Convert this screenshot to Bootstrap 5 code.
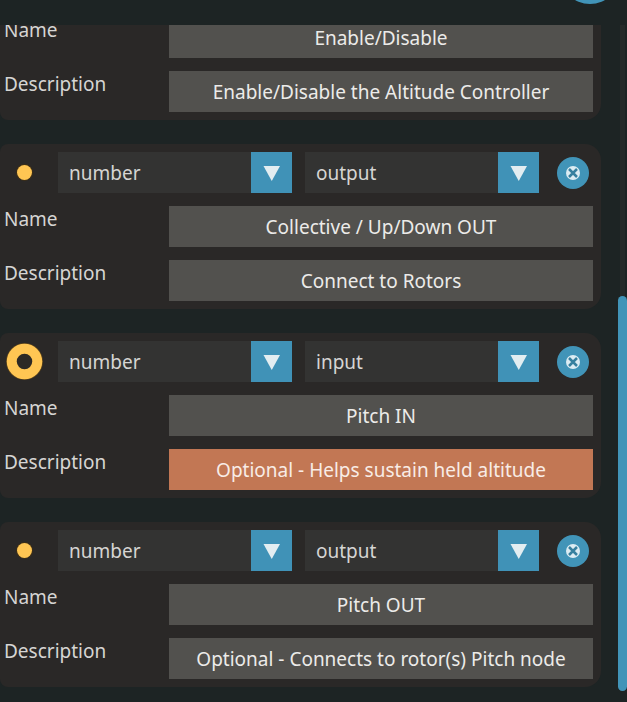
<!DOCTYPE html>
<html lang="en">
<head>
<meta charset="utf-8">
<meta name="viewport" content="width=device-width, initial-scale=1">
<title>Logic nodes</title>
<link href="https://cdn.jsdelivr.net/npm/bootstrap@5.3.0/dist/css/bootstrap.min.css" rel="stylesheet">
<style>
  body { background: #1d2424; color: #d6d5d3; font-family: "Noto Sans", sans-serif; font-size: 19px; line-height: 26px; }
  .topbar { height: 25px; padding-right: 7px; }
  .add-btn { width: 60px; height: 60px; margin-bottom: 21px; background: #4194b8; }
  .node-list { gap: 24px; padding-bottom: 15px; }
  .node-card { background: #2a2827; border-radius: 8px 16px 16px 8px; padding: 8px 8px 8px 0; gap: 13px; }
  .node-card.cut { padding-top: 0; border-top-right-radius: 0; border-top-left-radius: 0; }
  .head-row { gap: 13px; }
  .pin { width: 45px; padding-left: 4px; }
  .pick { appearance: none; flex: 1 1 0; min-width: 0; height: 41px; padding: 0 52px 0 11px; border: 0; border-radius: 0; color: #d6d5d3;
    background: url("data:image/svg+xml,%3Csvg xmlns='http://www.w3.org/2000/svg' width='41' height='41'%3E%3Crect width='41' height='41' fill='%234092b7'/%3E%3Cpath d='M12.500 14h16.500l-8.250 15z' fill='%23e2edf1'/%3E%3C/svg%3E") right center / 41px 41px no-repeat #333332; }
  .close-slot { width: 41px; }
  .del-btn { width: 32px; height: 32px; background: #4194b8; }
  .name-label { width: 169px; padding-left: 4px; flex: none; }
  .field { flex: 1 1 0; min-width: 0; height: 41px; border: 0; padding: 0 8px; background: #52514e; color: #ecebe9; text-align: center; }
  .field.hot { background: #c27754; color: #f8ece6; }
  .scroll-col { width: 9px; margin-left: 17px; padding-bottom: 11px; }
  .track { background: linear-gradient(#252a29, #252a29) 2px 0 / 5px 100% no-repeat; }
  .thumb { height: 395px; border-radius: 5px; background: #4194b8; }
</style>
<script src="https://cdn.jsdelivr.net/npm/bootstrap@5.3.0/dist/js/bootstrap.bundle.min.js"></script>
</head>
<body class="vh-100 d-flex flex-column overflow-hidden">

<svg class="d-none" aria-hidden="true">
  <symbol id="cross" viewBox="0 0 16 16">
    <circle cx="8" cy="8" r="7" fill="#dcecf3"/>
    <path d="M4 4l8 8M12 4l-8 8" stroke="#37809f" stroke-width="2.500" fill="none"/>
  </symbol>
  <symbol id="dot" viewBox="0 0 41 41">
    <circle cx="20.500" cy="20.500" r="8.500" fill="#3d2f18"/>
    <circle cx="20.500" cy="20.500" r="7.500" fill="#ffc653"/>
  </symbol>
  <symbol id="ring" viewBox="0 0 41 41">
    <circle cx="20.500" cy="20.500" r="18.500" fill="#5a431b"/>
    <circle cx="20.500" cy="20.500" r="17.750" fill="#ffc653"/>
    <circle cx="20.500" cy="20.500" r="7.750" fill="#2c2925"/>
  </symbol>
</svg>

<header class="topbar d-flex justify-content-end align-items-end overflow-hidden flex-shrink-0">
  <button type="button" class="add-btn btn rounded-circle border-0 p-0 flex-shrink-0" aria-label="Add node"></button>
</header>

<div class="d-flex flex-grow-1 overflow-hidden">
  <main class="node-list d-flex flex-column justify-content-end flex-grow-1 overflow-hidden">

    <section class="node-card cut d-flex flex-column flex-shrink-0">
      <div class="d-flex"><label class="name-label" for="n1">Name</label><input class="field" id="n1" type="text" value="Enable/Disable"></div>
      <div class="d-flex"><label class="name-label" for="d1">Description</label><input class="field" id="d1" type="text" value="Enable/Disable the Altitude Controller"></div>
    </section>

    <section class="node-card d-flex flex-column flex-shrink-0">
      <div class="head-row d-flex align-items-center">
        <div class="pin d-flex flex-shrink-0"><svg width="41" height="41" aria-hidden="true"><use href="#dot"/></svg></div>
        <select class="pick" aria-label="Type"><option>number</option></select>
        <select class="pick" aria-label="Direction"><option>output</option></select>
        <div class="close-slot d-flex justify-content-center flex-shrink-0"><button type="button" class="del-btn btn rounded-circle border-0 p-0 d-flex align-items-center justify-content-center" aria-label="Delete node"><svg width="16" height="16"><use href="#cross"/></svg></button></div>
      </div>
      <div class="d-flex"><label class="name-label" for="n2">Name</label><input class="field" id="n2" type="text" value="Collective / Up/Down OUT"></div>
      <div class="d-flex"><label class="name-label" for="d2">Description</label><input class="field" id="d2" type="text" value="Connect to Rotors"></div>
    </section>

    <section class="node-card d-flex flex-column flex-shrink-0">
      <div class="head-row d-flex align-items-center">
        <div class="pin d-flex flex-shrink-0"><svg width="41" height="41" aria-hidden="true"><use href="#ring"/></svg></div>
        <select class="pick" aria-label="Type"><option>number</option></select>
        <select class="pick" aria-label="Direction"><option>input</option></select>
        <div class="close-slot d-flex justify-content-center flex-shrink-0"><button type="button" class="del-btn btn rounded-circle border-0 p-0 d-flex align-items-center justify-content-center" aria-label="Delete node"><svg width="16" height="16"><use href="#cross"/></svg></button></div>
      </div>
      <div class="d-flex"><label class="name-label" for="n3">Name</label><input class="field" id="n3" type="text" value="Pitch IN"></div>
      <div class="d-flex"><label class="name-label" for="d3">Description</label><input class="field hot" id="d3" type="text" value="Optional - Helps sustain held altitude"></div>
    </section>

    <section class="node-card d-flex flex-column flex-shrink-0">
      <div class="head-row d-flex align-items-center">
        <div class="pin d-flex flex-shrink-0"><svg width="41" height="41" aria-hidden="true"><use href="#dot"/></svg></div>
        <select class="pick" aria-label="Type"><option>number</option></select>
        <select class="pick" aria-label="Direction"><option>output</option></select>
        <div class="close-slot d-flex justify-content-center flex-shrink-0"><button type="button" class="del-btn btn rounded-circle border-0 p-0 d-flex align-items-center justify-content-center" aria-label="Delete node"><svg width="16" height="16"><use href="#cross"/></svg></button></div>
      </div>
      <div class="d-flex"><label class="name-label" for="n4">Name</label><input class="field" id="n4" type="text" value="Pitch OUT"></div>
      <div class="d-flex"><label class="name-label" for="d4">Description</label><input class="field" id="d4" type="text" value="Optional - Connects to rotor(s) Pitch node"></div>
    </section>

  </main>
  <div class="scroll-col d-flex flex-column flex-shrink-0" aria-hidden="true">
    <div class="track d-flex flex-column justify-content-end flex-grow-1"><div class="thumb"></div></div>
  </div>
</div>

</body>
</html>
